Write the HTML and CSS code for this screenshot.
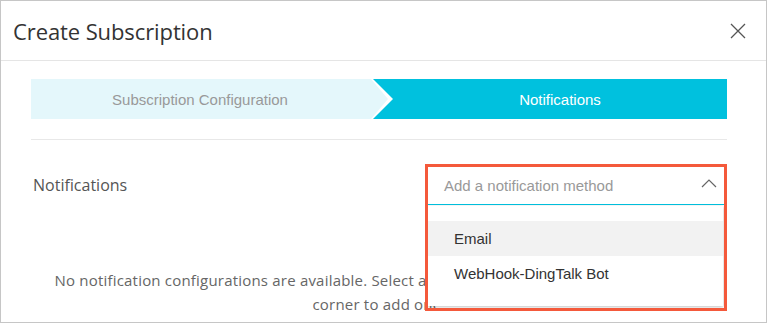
FILE: index.html
```html
<!DOCTYPE html>
<html lang="en">
<head>
  <meta charset="UTF-8">
  <title>Create Subscription</title>
  <link rel="stylesheet" href="styles.css">
</head>
<body>
  <div class="dialog">
    <div class="dialog-header">
      <h2 class="dialog-title">Create Subscription</h2>
      <button class="close-btn" title="Close">
        <svg width="16" height="16" viewBox="0 0 16 16"><path d="M1 1L15 15M15 1L1 15" stroke="#555" stroke-width="1.3" fill="none"/></svg>
      </button>
    </div>
    <div class="dialog-body">
      <div class="steps">
        <div class="step step-done"><div class="step-inner">Subscription Configuration</div></div>
        <div class="step step-current">Notifications</div>
      </div>
      <div class="divider"></div>
      <div class="form-row">
        <div class="form-label">Notifications</div>
        <div class="select-wrap">
          <div class="select">
            <span class="select-placeholder">Add a notification method</span>
            <svg class="select-arrow" width="16" height="10" viewBox="0 0 16 10"><path d="M1 9L8 2L15 9" stroke="#666" stroke-width="1.2" fill="none"/></svg>
          </div>
          <ul class="select-menu">
            <li class="menu-item hover">Email</li>
            <li class="menu-item">WebHook-DingTalk Bot</li>
          </ul>
          <div class="highlight-frame"></div>
        </div>
      </div>
      <p class="empty-text">No notification configurations are available. Select a notification method in the upper-right corner to add one.</p>
    </div>
  </div>
</body>
</html>
```

FILE: styles.css
```css
html, body {
  margin: 0;
  padding: 0;
  background: #fff;
}

.dialog {
  width: 767px;
  height: 323px;
  box-sizing: border-box;
  border: 1px solid #c6c6c6;
  overflow: hidden;
  font-family: 'Open Sans', 'Noto Sans', sans-serif;
  color: #333;
}

.dialog-header {
  height: 59px;
  border-bottom: 1px solid #e5e5e5;
  display: flex;
  align-items: center;
  justify-content: space-between;
  padding: 0 20px 0 12px;
}

.dialog-title {
  margin: 0;
  font-size: 22px;
  font-weight: 400;
  color: #333;
  letter-spacing: -0.1px;
  padding-top: 1px;
}

.close-btn {
  border: none;
  background: none;
  padding: 0;
  margin: 0;
  width: 16px;
  height: 16px;
  cursor: pointer;
}

.dialog-body {
  padding: 18px 39px 0 30px;
}

.steps {
  display: flex;
  height: 40px;
  background: #00c1de;
  font-family: 'Liberation Sans', Arial, sans-serif;
  font-size: 15px;
}

.step-done {
  flex: 0 0 362px;
  background: #fff;
  clip-path: polygon(0 0, 342px 0, 362px 20px, 342px 40px, 0 40px);
}

.step-inner {
  height: 100%;
  background: #e4f7fb;
  color: #999;
  display: flex;
  align-items: center;
  justify-content: center;
  padding-right: 24px;
  clip-path: polygon(0 0, 340px 0, 357px 20px, 340px 40px, 0 40px);
}

.step-current {
  flex: 1;
  display: flex;
  align-items: center;
  justify-content: center;
  color: #fff;
}

.divider {
  margin-top: 20px;
  border-top: 1px solid #e8e8e8;
}

.form-row {
  display: flex;
  align-items: center;
  justify-content: space-between;
  margin-top: 26px;
}

.form-label {
  font-size: 16px;
  color: #555;
  padding-left: 2px;
  padding-bottom: 1px;
}

.select-wrap {
  position: relative;
  width: 297px;
  margin-right: 2px;
}

.select {
  height: 38px;
  border-bottom: 1px solid #00c1de;
  display: flex;
  align-items: center;
  justify-content: space-between;
  padding: 0 8px 0 16px;
  font-family: 'Liberation Sans', Arial, sans-serif;
  font-size: 15px;
}

.select-placeholder {
  color: #999;
}

.select-arrow {
  margin-top: -4px;
}

.select-menu {
  position: absolute;
  top: 40px;
  left: 0;
  right: 2px;
  margin: 0;
  padding: 15px 0;
  list-style: none;
  background: #fff;
  box-shadow: 0 1px 3px rgba(0,0,0,0.25);
  font-family: 'Liberation Sans', Arial, sans-serif;
  font-size: 15px;
  color: #333;
  z-index: 2;
}

.menu-item {
  height: 35px;
  line-height: 35px;
  padding-left: 26px;
}

.menu-item.hover {
  background: #f2f2f2;
}

.highlight-frame {
  position: absolute;
  top: -2px;
  left: -3px;
  width: 302px;
  height: 147px;
  box-sizing: border-box;
  border: 3px solid #f4593b;
  z-index: 3;
}

.empty-text {
  margin: 63px 0 0 0;
  text-align: center;
  font-size: 15px;
  line-height: 24px;
  letter-spacing: 0.2px;
  color: #666;
  padding: 0 10px;
}
```
